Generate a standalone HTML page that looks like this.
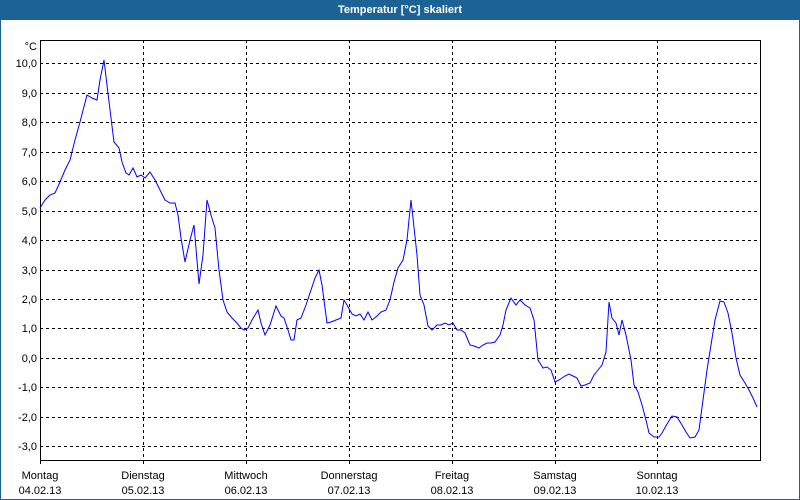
<!DOCTYPE html>
<html><head><style>
body{margin:0;width:800px;height:500px;overflow:hidden;background:#fff;font-family:"Liberation Sans",sans-serif;font-size:11px;color:#000}
.t{position:absolute;left:0;top:0;width:800px;height:20px;background:#1d6295;color:#fff;font-weight:bold;text-align:center;line-height:20px;font-size:11px}
.f{position:absolute;left:0;top:20px;width:798px;height:479px;border:1px solid #1d6295;border-top:none}
</style></head><body>
<div class="t">Temperatur [°C] skaliert</div>
<div class="f"></div>
<svg width="800" height="500" style="position:absolute;left:0;top:0" font-family="Liberation Sans, sans-serif" font-size="11">
<g stroke="#000" stroke-dasharray="3,3" stroke-width="1">
<line x1="143.5" y1="40" x2="143.5" y2="460"/><line x1="246.5" y1="40" x2="246.5" y2="460"/><line x1="349.5" y1="40" x2="349.5" y2="460"/><line x1="452.5" y1="40" x2="452.5" y2="460"/><line x1="555.5" y1="40" x2="555.5" y2="460"/><line x1="657.5" y1="40" x2="657.5" y2="460"/>
<line x1="40" y1="63.5" x2="760" y2="63.5"/><line x1="40" y1="93.5" x2="760" y2="93.5"/><line x1="40" y1="122.5" x2="760" y2="122.5"/><line x1="40" y1="152.5" x2="760" y2="152.5"/><line x1="40" y1="181.5" x2="760" y2="181.5"/><line x1="40" y1="211.5" x2="760" y2="211.5"/><line x1="40" y1="240.5" x2="760" y2="240.5"/><line x1="40" y1="270.5" x2="760" y2="270.5"/><line x1="40" y1="299.5" x2="760" y2="299.5"/><line x1="40" y1="328.5" x2="760" y2="328.5"/><line x1="40" y1="358.5" x2="760" y2="358.5"/><line x1="40" y1="387.5" x2="760" y2="387.5"/><line x1="40" y1="417.5" x2="760" y2="417.5"/><line x1="40" y1="446.5" x2="760" y2="446.5"/>
</g>
<rect x="40.5" y="40.5" width="720" height="420" fill="none" stroke="#000"/>
<g stroke="#000"><line x1="40.5" y1="460" x2="40.5" y2="464"/><line x1="143.5" y1="460" x2="143.5" y2="464"/><line x1="246.5" y1="460" x2="246.5" y2="464"/><line x1="349.5" y1="460" x2="349.5" y2="464"/><line x1="452.5" y1="460" x2="452.5" y2="464"/><line x1="555.5" y1="460" x2="555.5" y2="464"/><line x1="657.5" y1="460" x2="657.5" y2="464"/></g>
<g text-anchor="end"><text x="37" y="50">°C</text><text x="37" y="67">10,0</text><text x="37" y="97">9,0</text><text x="37" y="126">8,0</text><text x="37" y="156">7,0</text><text x="37" y="185">6,0</text><text x="37" y="215">5,0</text><text x="37" y="244">4,0</text><text x="37" y="274">3,0</text><text x="37" y="303">2,0</text><text x="37" y="332">1,0</text><text x="37" y="362">0,0</text><text x="37" y="391">-1,0</text><text x="37" y="421">-2,0</text><text x="37" y="450">-3,0</text></g>
<g text-anchor="middle"><text x="40" y="479">Montag</text><text x="40" y="494">04.02.13</text><text x="143" y="479">Dienstag</text><text x="143" y="494">05.02.13</text><text x="246" y="479">Mittwoch</text><text x="246" y="494">06.02.13</text><text x="349" y="479">Donnerstag</text><text x="349" y="494">07.02.13</text><text x="452" y="479">Freitag</text><text x="452" y="494">08.02.13</text><text x="555" y="479">Samstag</text><text x="555" y="494">09.02.13</text><text x="657" y="479">Sonntag</text><text x="657" y="494">10.02.13</text></g>
<polyline fill="none" stroke="#0000ff" stroke-width="1" points="40,208 45,200 50,195 55,193 60,182 65,170 70,160 75,140 80,122 87,95 92,98 97,100 100,80 104,60 107,85 111,118 114,142 119,148 122,162 126,173 129,175 133,168 137,177 141,175 145,178 150,172 155,180 160,190 165,200 170,203 175,203 178,215 181,238 185,262 190,240 194,225 199,284 203,255 207,200 211,215 215,228 219,270 223,300 227,312 232,318 236,322 241,328 244,330 248,328 252,320 258,310 261,323 265,335 270,325 276,306 281,316 284,318 288,330 291,340 294,340 297,320 301,318 306,305 311,290 315,278 319,270 322,285 327,323 331,322 336,320 341,318 344,300 347,305 352,314 356,316 360,314 364,320 368,312 372,320 377,316 381,312 386,310 390,300 394,282 398,268 403,260 407,240 411,200 413,218 417,255 420,295 424,305 428,326 432,330 437,325 441,325 445,323 449,325 453,323 457,330 461,330 465,333 470,345 474,346 479,348 483,345 487,343 491,343 495,342 500,335 503,325 506,310 511,298 516,305 520,300 525,305 530,308 534,320 538,360 543,368 547,367 551,370 555,382 559,380 565,376 569,374 573,376 577,378 581,386 585,385 590,383 594,375 598,370 602,365 606,352 609,302 612,318 616,323 619,335 622,320 626,335 631,360 634,385 638,392 642,405 646,420 649,433 654,437 659,437 662,433 667,424 672,416 677,417 682,425 686,432 690,438 695,437 699,430 703,400 707,370 711,345 715,320 720,301 724,302 728,313 732,333 736,358 740,375 745,383 749,390 753,398 757,407"/>
</svg>
</body></html>
